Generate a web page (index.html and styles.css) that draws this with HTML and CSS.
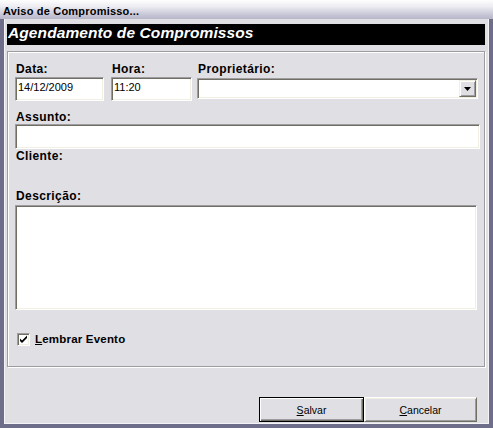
FILE: index.html
```html
<!DOCTYPE html>
<html lang="pt">
<head>
<meta charset="utf-8">
<title>Aviso de Compromisso</title>
<link rel="stylesheet" href="styles.css">
</head>
<body>
<div class="window">
  <div class="titlebar">Aviso de Compromisso...</div>
  <div class="client">
    <div class="banner">Agendamento de Compromissos</div>
    <div class="group">
      <div class="row1">
        <div class="field f-data">
          <div class="lbl">Data:</div>
          <div class="edit">14/12/2009</div>
        </div>
        <div class="field f-hora">
          <div class="lbl">Hora:</div>
          <div class="edit">11:20</div>
        </div>
        <div class="field f-prop">
          <div class="lbl">Proprietário:</div>
          <div class="combo">
            <span class="combo-btn"><svg width="7" height="4" viewBox="0 0 7 4"><path d="M0 0H7L3.5 4Z" fill="#000"/></svg></span>
          </div>
        </div>
      </div>
      <div class="lbl lbl-assunto">Assunto:</div>
      <div class="edit edit-assunto"></div>
      <div class="lbl lbl-cliente">Cliente:</div>
      <div class="lbl lbl-desc">Descrição:</div>
      <div class="memo"></div>
      <div class="check">
        <span class="box"><svg width="9" height="9" viewBox="0 0 9 9"><path d="M1 3.5L3 5.5L8 0.5V3L3 8L1 6Z" fill="#000"/></svg></span>
        <span class="check-text"><u>L</u>embrar Evento</span>
      </div>
    </div>
    <div class="buttons">
      <div class="btn btn-default"><span><u>S</u>alvar</span></div>
      <div class="btn btn-cancel"><span><u>C</u>ancelar</span></div>
    </div>
  </div>
</div>
</body>
</html>
```
FILE: styles.css
```css
* { box-sizing: border-box; }
html, body { margin: 0; padding: 0; }
body {
  width: 493px;
  height: 428px;
  overflow: hidden;
  background: #e0dfe3;
  font-family: "Liberation Sans", Arial, sans-serif;
  color: #000;
}
.window {
  width: 493px;
  height: 428px;
  display: flex;
  flex-direction: column;
}
.titlebar {
  height: 19px;
  padding: 3px 0 0 3px;
  font-weight: bold;
  font-size: 11px;
  line-height: 16px;
  letter-spacing: 0.2px;
  background: linear-gradient(#fefefe 0%, #ececf2 35%, #c9c8d8 75%, #b7b6ca 100%);
}
.client {
  flex: 1;
  display: flex;
  flex-direction: column;
  border-style: solid;
  border-color: #6f6e8a;
  border-width: 0 4px 4px 4px;
  padding-top: 5px;
  box-shadow: inset 1px 0 0 #f4f4f7, inset -1px -1px 0 #f4f4f7;
}
.banner {
  height: 21px;
  margin: 0 4px 0 3px;
  padding-left: 1px;
  background: #000;
  color: #fff;
  font-style: italic;
  font-weight: bold;
  font-size: 15.5px;
  line-height: 18px;
  letter-spacing: 0.1px;
}
.group {
  height: 316px;
  margin: 6px 4px 0 3px;
  padding: 10px 0 0 7px;
  border: 1px solid #9d9da1;
  box-shadow: 1px 1px 0 #fff, inset 1px 1px 0 #fff;
  display: flex;
  flex-direction: column;
}
.row1 { display: flex; }
.f-data { width: 89px; margin-right: 7px; }
.f-hora { width: 81px; margin-right: 5px; }
.f-prop { width: 281px; }
.lbl {
  font-weight: bold;
  font-size: 12px;
  line-height: 14px;
  letter-spacing: 0.4px;
  padding-left: 1px;
}
.field .lbl { margin-bottom: 1px; }
.edit, .combo, .memo, .box {
  background: #fff;
  border: 1px solid;
  border-color: #9d9da1 #fff #fff #9d9da1;
  box-shadow: inset 1px 1px 0 #716f64, inset -1px -1px 0 #f1efe2;
}
.edit {
  height: 24px;
  padding-left: 2px;
  font-size: 11px;
  line-height: 19px;
}
.combo {
  height: 21px;
  margin-top: 2px;
  padding: 1px;
  display: flex;
  justify-content: flex-end;
}
.combo-btn {
  width: 17px;
  height: 100%;
  background: #e0dfe3;
  border: 1px solid;
  border-color: #f1efe2 #716f64 #716f64 #f1efe2;
  box-shadow: inset 1px 1px 0 #fff, inset -1px -1px 0 #9d9da1;
  display: flex;
  align-items: center;
  justify-content: center;
}
.lbl-assunto { margin-top: 9px; }
.edit-assunto { width: 465px; height: 25px; }
.lbl-desc { margin-top: 26px; margin-bottom: 2px; }
.memo { width: 462px; height: 105px; }
.check {
  margin-top: 23px;
  padding-left: 2px;
  height: 13px;
  display: flex;
  align-items: center;
}
.box {
  width: 13px;
  height: 13px;
  display: flex;
  align-items: center;
  justify-content: center;
  margin-right: 5px;
}
.check-text {
  font-weight: bold;
  font-size: 11.5px;
  line-height: 13px;
  letter-spacing: 0.2px;
}
.buttons {
  margin-top: 30px;
  padding-right: 12px;
  display: flex;
  justify-content: flex-end;
}
.btn {
  height: 25px;
  font-size: 10.5px;
  background: #e0dfe3;
  display: flex;
  align-items: center;
  justify-content: center;
}
.btn-default {
  width: 105px;
  border: 1px solid #000;
  box-shadow: inset 1px 1px 0 #fff, inset -1px -1px 0 #716f64, inset -2px -2px 0 #9d9da1;
}
.btn-cancel {
  width: 113px;
  border: 1px solid;
  border-color: #fff #716f64 #716f64 #fff;
  box-shadow: inset 1px 1px 0 #f1efe2, inset -1px -1px 0 #9d9da1;
}
u { text-underline-offset: 1px; }
```
